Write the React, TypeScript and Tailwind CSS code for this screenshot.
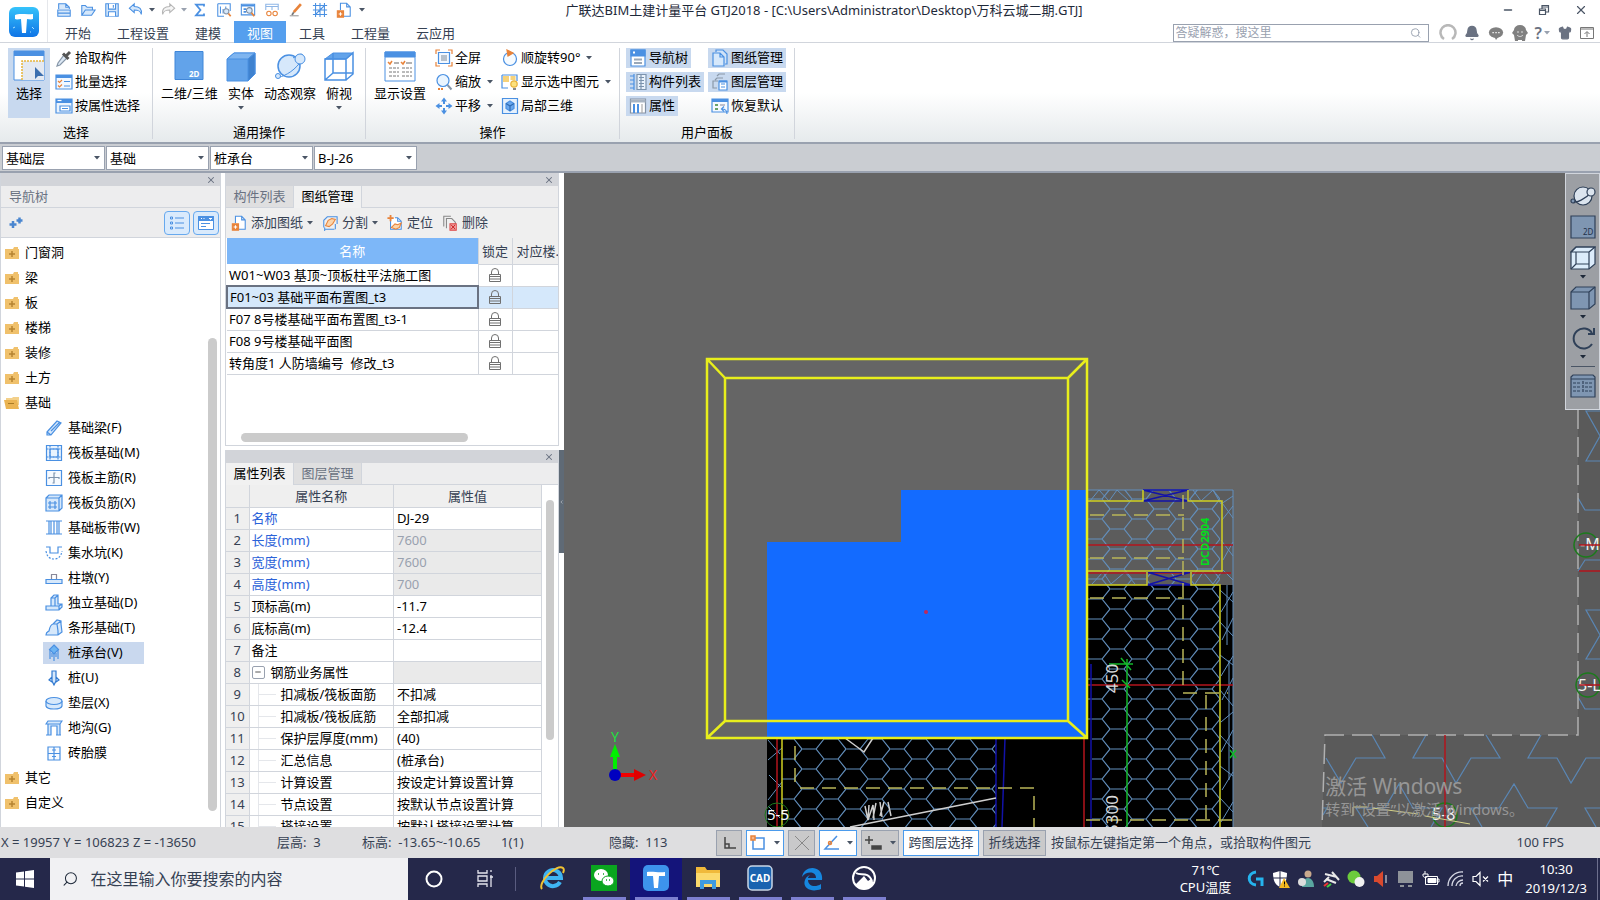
import type { ReactNode } from "react";
import { Bell, ChevronDown, MessageCircle, Minus, Search, Shirt, X } from "lucide-react";

const BLUE = "#4a90e2";
const PALE = "#d6e8fb";
const ORANGE = "#e8833a";

// Line icons, all drawn on an 18x18 grid
const glyphs: Record<string, ReactNode> = {
  file: (
    <>
      <path d="M3 8V2h8l4 4v2M11 2v4h4" fill={PALE} />
      <path d="M2 9h14v7H2zM2 12.500h14" fill={PALE} />
    </>
  ),
  open: <path d="M2 15V4h4l2 2h6v3M2 15l4-6h11l-4 6z" fill={PALE} />,
  save: (
    <>
      <path d="M2 2h14v14H2z" fill={PALE} />
      <path d="M5 2v6h8V2M5 16v-5h8v5M10.500 3.500v3" fill="#fff" />
    </>
  ),
  undo: <path d="M7 2L1.500 7 7 12V9c5 0 7 1 8 5 1-6-2-9-8-9z" fill={PALE} />,
  redo: <path d="M11 2l5.500 5-5.500 5V9c-5 0-7 1-8 5-1-6 2-9 8-9z" stroke="#b5b5b5" fill="#f5f5f5" />,
  sigma: <path d="M13.500 5V3H4.500l5 6-5 6h9v-2" strokeWidth="2" />,
  report: (
    <>
      <path d="M2 2v14h7M2 2h14v8M5 5v8M8 8v5M11 5v4" fill="none" />
      <circle cx="11.500" cy="10.500" r="3" fill={PALE} stroke="#8293a8" />
      <path d="M14 13l2.500 3" stroke={ORANGE} strokeWidth="2" />
    </>
  ),
  lookup: (
    <>
      <path d="M1.500 2.500h15v12h-15z" fill="#fff" />
      <path d="M1.500 4h15M4 8h3M4 11h3" strokeWidth="2" />
      <circle cx="10.500" cy="9.500" r="3.200" fill={PALE} stroke="#7d8c9f" />
      <path d="M13 12l3 4" stroke={ORANGE} strokeWidth="2" />
    </>
  ),
  glasses: (
    <>
      <path d="M2 9V2.500h14V9M2 5h14M9 5v4" stroke="#8fb6e6" />
      <circle cx="5.500" cy="13" r="2.500" stroke={ORANGE} />
      <circle cx="12.500" cy="13" r="2.500" stroke={ORANGE} />
    </>
  ),
  brush: (
    <>
      <path d="M14.500 2.500l-8 9" stroke={ORANGE} strokeWidth="3" />
      <path d="M6.500 11.500l-2 3" stroke="#777" strokeWidth="2" />
      <path d="M2 15.500h10" stroke="#999" />
    </>
  ),
  axes: <path d="M4 1v16M9 1v16M14 1v16M1 4h16M1 9h16M1 14h16M9 9l5-5M4 14l5-5" />,
  addfile: (
    <>
      <path d="M5 9V1.500h7l4 4V16H9M12 1.500v4h4" fill="#fff" />
      <path d="M1.500 10h7v7h-7z" fill={ORANGE} stroke={ORANGE} />
      <path d="M5 11.500v4M3 13.500h4" stroke="#fff" />
    </>
  ),
  pick: (
    <>
      <path d="M9 6l3 3-7 7-3 1 1-3z" fill="#dce8f4" stroke="#8696a8" />
      <path d="M8 4.500l5.500 5.500M11 7l4-4" stroke="#555" strokeWidth="3" />
    </>
  ),
  batch: (
    <>
      <path d="M1 2h16v14H1z" fill="#f2f8ff" />
      <path d="M1 3.500h16" strokeWidth="3" />
      <path d="M3 8l1.500 1.500L7 7M3 12.500L4.500 14 7 11.500" stroke={ORANGE} />
      <path d="M9 8.500h6M9 13h6" />
    </>
  ),
  attr: (
    <>
      <path d="M1 2h16v14H1z" fill="#eaf3fd" />
      <path d="M1 4h16" strokeWidth="4" />
      <path d="M2.500 3.500h4" stroke="#fff" />
      <path d="M5 9h10v5H5zM7 11.500h6" fill="#fff" />
    </>
  ),
  full: (
    <>
      <path d="M1 5V1h4M13 1h4v4M17 13v4h-4M5 17H1v-4" stroke={ORANGE} />
      <path d="M3.500 3.500h11v11h-11z" fill="#f2f8ff" />
      <path d="M6 7h6M6 9h6M6 11h6" stroke="#7a8797" />
    </>
  ),
  zoom: (
    <>
      <circle cx="8" cy="7.500" r="6" fill="#eaf5ff" />
      <path d="M12.500 12l4 4.500" stroke="#8595a8" strokeWidth="2" />
      <path d="M3 16h5" stroke={ORANGE} strokeWidth="2" strokeDasharray="2 1" />
    </>
  ),
  move: (
    <path
      d="M9 .500L6 4.500h2v2.500h2V4.500h2zM9 17.500L6 13.500h2V11h2v2.500h2zM.500 9l4-3v2H7v2H4.500v2zM17.500 9l-4-3v2H11v2h2.500v2z"
      fill={BLUE}
      stroke="none"
    />
  ),
  rotate: (
    <>
      <circle cx="9" cy="10" r="6.500" fill="#f6fbff" />
      <path d="M6 1l6 3-5 3z" fill={ORANGE} stroke={ORANGE} />
    </>
  ),
  lamp: (
    <>
      <path d="M1 2h15v6M1 2v13h6" fill="none" />
      <path d="M2 3h6v6H2zM9.500 3h5v4h-5z" fill="#f6d27a" stroke="none" />
      <circle cx="13" cy="11" r="3.200" fill="#fde27e" stroke="#e8b13a" />
      <path d="M12 16h3" stroke="#888" strokeWidth="2" />
    </>
  ),
  local3d: (
    <>
      <path d="M1.500 1.500h15v15h-15z" fill="#e6f1fd" />
      <path d="M9 4l4 2.500v5L9 14l-4-2.500v-5z" fill="#6aa8ee" />
      <path d="M9 9v5M5 6.500L9 9l4-2.500" stroke="#2f6bb3" />
    </>
  ),
  nav: (
    <>
      <path d="M2 1h14v16H2z" fill="#fff" />
      <path d="M2 1h14v6H2z" fill={BLUE} />
      <path d="M4 3.500h2" stroke="#fff" strokeWidth="2" />
      <path d="M5 10.500h8M5 14h8" stroke="#9aa8b8" strokeWidth="2" />
    </>
  ),
  list: (
    <>
      <path d="M1 3h4M1 7h4M1 11h4M1 15h4M5 1v16" />
      <path d="M8 1.500h9v15H8z" fill="#e9f2fc" stroke="#7c93ad" />
      <path d="M10 4.500h5M10 7.500h5M10 10.500h5M10 13.500h5M12 2v14" stroke="#7c93ad" />
    </>
  ),
  props: (
    <>
      <path d="M1.500 2h15v14h-15z" fill="#fff" stroke="#8392a5" />
      <path d="M1.500 4h15" stroke="#a8b4c2" strokeWidth="3" />
      <path d="M5 7v9M9 7v9" stroke={BLUE} strokeWidth="2" />
      <path d="M13 7v9" stroke="#aaa" />
    </>
  ),
  sheets: (
    <>
      <path d="M5 3V1h7l4 4v10h-2" fill="#cfe2f8" />
      <path d="M2 4h7l4 4v9H2zM9 4v4h4" fill={PALE} />
    </>
  ),
  layers: (
    <>
      <path d="M6 3l2-2h6M4 7l2-2h6M2 11V8h5M2 11v4h4" stroke="#8a98a8" />
      <path d="M8 8h8v9H8z" fill="#fff" />
      <path d="M10 11h4M10 14h4" />
      <path d="M8 8.500h8" strokeWidth="2" />
    </>
  ),
  restore: (
    <>
      <path d="M1 2h16v13H1z" fill="#f4f9ff" />
      <path d="M1 3.500h16" strokeWidth="3" />
      <path d="M4 8h3M4 12h3" stroke="#6aa36a" strokeWidth="2" />
      <path d="M9 8h5" stroke="#99a" />
      <path d="M16 17c0-4-2-5-5-5M13 9.500L10.500 12l2.500 2.500" />
    </>
  ),
  split: (
    <>
      <path d="M2 14V6l4-4h11v8M3 16h11M3 14v4M15 10v6" />
      <path d="M4 12l3-6 4-2 4 1-3 5-4 3z" fill="#fbd5ac" stroke={ORANGE} />
    </>
  ),
  locate: (
    <>
      <path d="M4 6v10h12V7l-4-4H9M12 3v4h4" fill="#fff" />
      <path d="M4 0v7M.500 3.500h7" stroke={ORANGE} strokeWidth="2" />
      <path d="M5 14l4-4 3 1 4-2-2 5-4 2z" fill="#fbd5ac" stroke={ORANGE} />
    </>
  ),
  remove: (
    <>
      <path d="M2 13V1.500h8M5 15V4h6l4 4v2" fill="none" stroke="#888" />
      <path d="M9 10h7v7H9z" fill="#f7c4c4" stroke="#d44" />
      <path d="M10.500 11.500l4 4M14.500 11.500l-4 4" stroke="#c22" />
    </>
  ),
  beam: <path d="M2 13L12 2l4 2L6 16H2zM2 13l4 3M6 12L15 3" fill={PALE} />,
  raft: (
    <>
      <path d="M1.500 1.500h15v15h-15zM5 5h8v8H5z" fill="#e9f3fe" />
      <path d="M1.500 5h15M1.500 13h15M5 1.500v15M13 1.500v15" strokeDasharray="2 1" />
    </>
  ),
  mainbar: (
    <>
      <path d="M1.500 1.500h15v15h-15z" fill="#f6faff" />
      <path d="M4 10V8.500h10V10M10.500 4H9v10H7.500" stroke="#7c93ad" />
    </>
  ),
  negbar: (
    <>
      <path d="M1 4l3-3h13v13l-3 3H1zM1 4h13v13M14 4l3-3" fill={PALE} />
      <path d="M5 7v8M10 7v8M3 9h9M3 13h9" />
    </>
  ),
  band: <path d="M1 2h16M1 15h16M4 2v13M6 2v13M9 2v13M12 2v13M14 2v13" fill="none" />,
  pit: (
    <>
      <path d="M1 3h4v6h8V3h4" fill="none" />
      <path d="M1 7c1 6 4 8 8 8s7-2 8-8" strokeDasharray="2 1.500" />
    </>
  ),
  pier: (
    <>
      <path d="M1 10.500h16v4H1z" fill={PALE} />
      <path d="M6.500 10V5.500h5V10" stroke="#889" />
    </>
  ),
  isolated: <path d="M1 12h5V4l3-3h4v9h4v3l-3 3H1zM6 4h4v8M10 4l3-3M1 12h13v4M14 12l3-2" fill={PALE} />,
  strip: <path d="M1 16c0-3 1-3 3-4 1-4 1-6 4-7l4-4 4 1v3l1 8-4 3zM8 5h4l1 7v4M12 5l4-3" fill={PALE} />,
  cap: (
    <>
      <path d="M9 1l4.500 4.500L9 10 4.500 5.500z" fill="#6db4f2" />
      <path d="M5 6v9M9 10v7M13 6v9M7 9v4M11 9v4" />
    </>
  ),
  pile: <path d="M7 2h4v10l-2 4-2-4zM7 8l-3 3 3 2M11 8l3 3-3 2" fill={PALE} stroke="#2f78d0" />,
  cushion: (
    <>
      <path d="M1 7v5c1 4 15 4 16 0V7" fill={PALE} />
      <ellipse cx="9" cy="7" rx="8" ry="3.500" fill={PALE} />
    </>
  ),
  trench: <path d="M1 5l2-3h14l-2 3zM3 5v11h3V7h6v9h3V5M1 16h5M11 16h5" fill={PALE} />,
  brick: <path d="M3 3h12v13H3zM3 9.500h12M9 3v13M7 6h4M7 12.500h4" fill="#f6faff" />,
};

function Glyph({ name, className = "w-[18px] h-[18px]" }: { name: string; className?: string }) {
  return (
    <svg
      viewBox="0 0 18 18"
      className={`shrink-0 ${className}`}
      fill="none"
      stroke={BLUE}
      strokeWidth="1.200"
      aria-hidden="true"
    >
      {glyphs[name]}
    </svg>
  );
}

function Caret({ className = "text-gray-600" }: { className?: string }) {
  return (
    <svg viewBox="0 0 6 4" className={`w-[6px] h-1 shrink-0 ${className}`} fill="currentColor" aria-hidden="true">
      <path d="M0 0h6L3 3.500z" />
    </svg>
  );
}

function Logo({ className }: { className: string }) {
  return (
    <svg viewBox="0 0 30 30" className={className} aria-hidden="true">
      <defs>
        <linearGradient id="logo" x1="0" y1="0" x2="0" y2="1">
          <stop offset="0" stopColor="#35c3fb" />
          <stop offset="1" stopColor="#0f74e6" />
        </linearGradient>
      </defs>
      <rect width="30" height="30" rx="6" fill="url(#logo)" />
      <path d="M6 8c5-2 11 0 18-1v5c-2 1-4 0-6 0l-1 14h-4l-1-14c-2 0-4 1-6 0z" fill="#fff" />
      <path d="M4 21l2-1M23 20l2 2M21 25h1" stroke="#a9e2ff" />
    </svg>
  );
}

const quickTools = ["sigma", "report", "lookup", "glasses", "brush", "axes", "addfile"];
const menuTabs = ["开始", "工程设置", "建模", "视图", "工具", "工程量", "云应用"];

function TitleBar() {
  return (
    <header className="flex h-[43px] border-b border-gray-300 bg-white">
      <div className="flex w-12 shrink-0 items-center justify-center border-r border-gray-200 pt-[2px]">
        <Logo className="h-[30px] w-[30px]" />
      </div>
      <div className="flex flex-1 flex-col">
        <div className="grid h-[23px] grid-cols-[1fr_auto_1fr] items-center">
          <div className="flex items-center gap-[6px] pl-[7px]">
            <Glyph name="file" className="h-4 w-[18px]" />
            <Glyph name="open" className="h-4 w-[18px]" />
            <Glyph name="save" className="h-4 w-[18px]" />
            <Glyph name="undo" className="h-4 w-[18px]" />
            <Caret className="-mx-[2px] text-gray-600" />
            <Glyph name="redo" className="h-4 w-[18px]" />
            <Caret className="-mx-[2px] text-gray-400" />
            {quickTools.map((t) => (
              <Glyph key={t} name={t} className="h-4 w-[18px]" />
            ))}
            <Caret />
          </div>
          <h1 className="pt-px text-[13px] text-gray-800">
            广联达BIM土建计量平台 GTJ2018 - [C:\Users\Administrator\Desktop\万科云城二期.GTJ]
          </h1>
          <div className="flex items-center justify-end gap-6 pr-3 text-gray-600">
            <button type="button" aria-label="最小化">
              <Minus className="h-3 w-3" strokeWidth={3} />
            </button>
            <button type="button" aria-label="还原">
              <svg viewBox="0 0 12 12" className="h-3 w-3" fill="none" stroke="currentColor" strokeWidth="1.200">
                <path d="M1.500 5h6v5.500h-6zM1.500 6.500h6M4 5V1.500h6.500V8H8M4 3h6.500" />
              </svg>
            </button>
            <button type="button" aria-label="关闭">
              <X className="h-[14px] w-[14px]" strokeWidth={2} />
            </button>
          </div>
        </div>
        <div className="flex flex-1 items-stretch justify-between">
          <nav className="flex pl-1">
            {menuTabs.map((tab) => (
              <button
                key={tab}
                type="button"
                className={
                  tab === "视图"
                    ? "bg-[#559fee] px-[13px] pt-px text-[13px] leading-[18px] text-white"
                    : "px-[13px] pt-px text-[13px] leading-[18px] text-gray-700"
                }
              >
                {tab}
              </button>
            ))}
          </nav>
          <div className="flex items-center gap-[6px] pr-[6px] text-gray-500">
            <label className="mr-1 flex h-[18px] w-[256px] items-center border border-gray-400 px-[2px]">
              <input
                type="text"
                aria-label="搜索"
                placeholder="答疑解惑，搜这里"
                className="w-full bg-transparent text-xs outline-none placeholder:text-gray-400"
              />
              <Search className="mr-1 h-3 w-3 text-gray-400" />
            </label>
            <svg viewBox="0 0 18 18" className="h-[18px] w-[18px]" fill="none" stroke="#b8b8b8" strokeWidth="2.500">
              <path d="M5 15A7.500 7.500 0 1 1 13 15" />
            </svg>
            <Bell className="h-4 w-[18px] fill-gray-500" />
            <svg viewBox="0 0 18 18" className="h-4 w-[18px]" fill="#808080">
              <ellipse cx="9" cy="8.500" rx="8" ry="6" />
              <path d="M7 13l2 4 3-4z" />
              <path d="M5 8.500h1.500M8.300 8.500h1.500M11.500 8.500H13" stroke="#fff" strokeWidth="1.500" />
            </svg>
            <svg viewBox="0 0 18 18" className="h-[18px] w-[18px]">
              <path d="M3 6a6 5 0 0 1 12 0l2 3-2 2-1 6h-3v-1H7v1H4l-1-6-2-2z" fill="#808080" />
              <path d="M6 8h2M10 8h2M6 11c2 2 4 2 6 0" stroke="#ddd" fill="none" />
            </svg>
            <span className="text-base font-semibold">?</span>
            <Caret className="-ml-1 text-gray-400" />
            <Shirt className="h-[14px] w-[18px] fill-gray-500" />
            <svg viewBox="0 0 14 14" className="h-[14px] w-[14px]" fill="none" stroke="#777">
              <path d="M.500 1.500h13v11H.500zM.500 3h13M7 11V6M4.500 8L7 5.500 9.500 8" />
            </svg>
          </div>
        </div>
      </div>
    </header>
  );
}

function RibbonGroup({ label, children, className }: { label: string; children: ReactNode; className: string }) {
  return (
    <section className={`mt-[5px] mb-[3px] flex shrink-0 flex-col border-r border-gray-300 ${className}`}>
      <div className="flex flex-1">{children}</div>
      <h2 className="text-center text-[13px] leading-[14px]">{label}</h2>
    </section>
  );
}

function SmallTool({ icon, label, caret, active }: { icon: string; label: string; caret?: boolean; active?: boolean }) {
  return (
    <button
      type="button"
      className={
        active
          ? "flex h-5 w-fit items-center gap-[2px] bg-[#c8d9ef] px-[3px] text-[13px] whitespace-nowrap"
          : "flex h-5 w-fit items-center gap-[2px] px-[3px] text-[13px] whitespace-nowrap"
      }
    >
      <Glyph name={icon} />
      {label}
      {caret && (
        <span className="ml-1">
          <Caret />
        </span>
      )}
    </button>
  );
}

function BigTool({ label, caret, children }: { label: string; caret?: boolean; children: ReactNode }) {
  return (
    <button type="button" className="flex flex-col items-center pt-[2px] text-[13px] leading-[18px] whitespace-nowrap">
      <svg viewBox="0 0 32 32" className="mb-[2px] h-8 w-8" fill="none" stroke={BLUE} aria-hidden="true">
        {children}
      </svg>
      {label}
      {caret && (
        <span className="mt-1">
          <Caret />
        </span>
      )}
    </button>
  );
}

function Ribbon() {
  return (
    <div className="flex h-[101px] border-b-2 border-gray-400 bg-gradient-to-b from-white from-50% to-[#e6eaec]">
      <RibbonGroup label="选择" className="w-[153px]">
        <button
          type="button"
          className="ml-2 flex h-[70px] w-[42px] flex-col items-center bg-[#c8d9ef] pt-[2px] text-[13px] leading-[18px]"
        >
          <svg viewBox="0 0 32 32" className="mb-[2px] h-8 w-8" aria-hidden="true">
            <path d="M1 1h30v29H1z" fill="#fff" stroke={BLUE} />
            <path d="M1 1h30v5H1z" fill={BLUE} />
            <path d="M9 30V11h22v19z" fill="#e4e9f1" />
            <path d="M9 30V11h22" fill="none" stroke="#e8b53a" strokeWidth="1.500" strokeDasharray="2 1" />
            <path d="M22 17v12l3-3h6z" fill="#3d6fae" />
          </svg>
          选择
        </button>
        <div className="ml-[2px] flex flex-col gap-1">
          <SmallTool icon="pick" label="拾取构件" />
          <SmallTool icon="batch" label="批量选择" />
          <SmallTool icon="attr" label="按属性选择" />
        </div>
      </RibbonGroup>

      <RibbonGroup label="通用操作" className="w-[213px]">
        <div className="flex flex-1 items-start justify-between pr-[10px] pl-2">
          <BigTool label="二维/三维">
            <path d="M2 1.500h28v28H2z" fill="#62a3ea" stroke="#3f86d8" />
            <text x="16" y="27" fontSize="8" fontWeight="700" fill="#fff" stroke="none">
              2D
            </text>
          </BigTool>
          <BigTool label="实体" caret>
            <path d="M2 9l7-6h21v21l-7 7H2z" fill="#62a3ea" />
            <path d="M2 9l7-6h21l-7 6z" fill="#7fb5f0" />
            <path d="M23 9l7-6v21l-7 7z" fill="#3f82cf" />
          </BigTool>
          <BigTool label="动态观察">
            <circle cx="15" cy="16" r="11" fill={PALE} strokeWidth="1.500" />
            <path d="M3 24c-5 7 12 2 21-9s5-14-5-7" />
            <circle cx="26" cy="9" r="5" fill={PALE} />
            <circle cx="4" cy="26" r="2.500" fill={PALE} />
          </BigTool>
          <BigTool label="俯视" caret>
            <path d="M2 9l8-6h20l-7 6z" fill="#62a3ea" />
            <path d="M2 9h21v21H2zM23 9l7-6v21l-7 6M10 3v20h20M10 23l-8 7" strokeWidth="1.500" />
          </BigTool>
        </div>
      </RibbonGroup>

      <RibbonGroup label="操作" className="w-[254px]">
        <div className="pl-2">
          <BigTool label="显示设置">
            <path d="M1 2h30v29H1z" fill="#fff" />
            <path d="M1 2h30v5H1z" fill={BLUE} />
            <path d="M4 12l2 2 2-3M17 12l2 2 2-3" stroke={ORANGE} strokeWidth="1.500" />
            <path d="M10 13h5M22 13h6" stroke="#666" />
            <path d="M5 18h10M5 22h10M5 26h10M18 18h10M18 22h10M18 26h10" stroke="#777" strokeDasharray="3 1" />
          </BigTool>
        </div>
        <div className="ml-[6px] flex w-[66px] flex-col gap-1">
          <SmallTool icon="full" label="全屏" />
          <SmallTool icon="zoom" label="缩放" caret />
          <SmallTool icon="move" label="平移" caret />
        </div>
        <div className="flex flex-col gap-1">
          <SmallTool icon="rotate" label="顺旋转90°" caret />
          <SmallTool icon="lamp" label="显示选中图元" caret />
          <SmallTool icon="local3d" label="局部三维" />
        </div>
      </RibbonGroup>

      <RibbonGroup label="用户面板" className="w-[175px]">
        <div className="ml-[6px] flex w-[82px] flex-col gap-1">
          <SmallTool icon="nav" label="导航树" active />
          <SmallTool icon="list" label="构件列表" active />
          <SmallTool icon="props" label="属性" active />
        </div>
        <div className="flex flex-col gap-1">
          <SmallTool icon="sheets" label="图纸管理" active />
          <SmallTool icon="layers" label="图层管理" active />
          <SmallTool icon="restore" label="恢复默认" />
        </div>
      </RibbonGroup>
    </div>
  );
}

const filters = [
  { label: "楼层", value: "基础层" },
  { label: "构件大类", value: "基础" },
  { label: "构件类型", value: "桩承台" },
  { label: "构件", value: "B-J-26" },
];

function FilterBar() {
  return (
    <div className="flex h-[29px] items-center gap-px border-b-2 border-gray-400 bg-[#cacdd2] pt-px pl-[2px]">
      {filters.map((f) => (
        <div key={f.label} className="relative flex w-[103px] items-center">
          <select
            aria-label={f.label}
            className="h-6 w-full appearance-none border border-gray-400 bg-white pl-[3px] text-[13px] leading-[22px]"
          >
            <option>{f.value}</option>
          </select>
          <span className="pointer-events-none absolute right-[5px]">
            <Caret />
          </span>
        </div>
      ))}
    </div>
  );
}

function PanelStrip() {
  return (
    <div className="flex h-[13px] shrink-0 items-center justify-end bg-[#d2d4d9] pr-1">
      <button type="button" aria-label="关闭面板" className="text-gray-500">
        <X className="h-[10px] w-[10px]" strokeWidth={2.500} />
      </button>
    </div>
  );
}

function Folder({ open }: { open?: boolean }) {
  return (
    <svg viewBox="0 0 16 16" className="h-4 w-4 shrink-0" aria-hidden="true">
      {open ? (
        <>
          <path d="M2 3h6l1-1h6v8H2z" fill="#f3d08a" />
          <path d="M0 5h13l2 9H2z" fill="#ebb452" />
          <path d="M4 8.500h6" stroke="#a97a24" />
        </>
      ) : (
        <>
          <path d="M1 4h8l1-2h4v2h1v10H1z" fill="#f0c16c" />
          <path d="M8 6v6M5 9h6" stroke="#b58330" strokeWidth="1.500" />
        </>
      )}
    </svg>
  );
}

const foundation = [
  ["beam", "基础梁(F)"],
  ["raft", "筏板基础(M)"],
  ["mainbar", "筏板主筋(R)"],
  ["negbar", "筏板负筋(X)"],
  ["band", "基础板带(W)"],
  ["pit", "集水坑(K)"],
  ["pier", "柱墩(Y)"],
  ["isolated", "独立基础(D)"],
  ["strip", "条形基础(T)"],
  ["cap", "桩承台(V)"],
  ["pile", "桩(U)"],
  ["cushion", "垫层(X)"],
  ["trench", "地沟(G)"],
  ["brick", "砖胎膜"],
];

function TreeFolder({ label, open }: { label: string; open?: boolean }) {
  return (
    <li className="flex h-[25px] items-center gap-[5px] pl-[3px] text-[13px]">
      <Folder open={open} />
      {label}
    </li>
  );
}

function NavTree() {
  return (
    <aside className="flex w-[221px] shrink-0 flex-col border-x border-gray-300 bg-white">
      <PanelStrip />
      <h2 className="h-[22px] shrink-0 border-b border-gray-300 bg-[#ededee] pl-2 text-[13px] leading-[20px] text-gray-500">
        导航树
      </h2>
      <div className="flex h-[30px] shrink-0 items-center border-b border-gray-300 bg-[#ededee] pr-[1px] pl-2">
        <svg viewBox="0 0 14 12" className="h-3 w-[14px]" stroke="#4a86d0" strokeWidth="2.500">
          <path d="M4 4v7M.500 7.500h7M10.500 .500v6M7.500 3.500h6" />
        </svg>
        <button
          type="button"
          aria-label="列表视图"
          className="ml-auto flex h-6 w-[26px] items-center justify-center rounded border border-[#67a9ee] bg-[#d9eafc]"
        >
          <svg viewBox="0 0 14 14" className="h-[14px] w-[14px]" stroke="#4a90e2" fill="none">
            <path d="M.500 1h2v2h-2zM.500 6h2v2h-2zM.500 11h2v2h-2zM5 2h9M5 7h9M5 12h9" />
          </svg>
        </button>
        <button
          type="button"
          aria-label="图标视图"
          className="ml-[3px] flex h-6 w-[26px] items-center justify-center rounded border border-[#67a9ee] bg-[#d9eafc]"
        >
          <svg viewBox="0 0 16 14" className="h-[14px] w-4" stroke="#4a90e2" fill="#fff">
            <path d="M.500 .500h15v13H.500z" />
            <path d="M.500 .500h15v4H.500z" fill="#4a90e2" />
            <path d="M3 2.500h1M5.500 2.500h1M11 2l1.500 1.500L14 2" stroke="#fff" />
            <path d="M3 7.500h9M3 10.500h5" />
          </svg>
        </button>
      </div>
      <div className="flex min-h-0 flex-1 pt-[2px]">
        <ul className="flex-1 overflow-hidden">
          {["门窗洞", "梁", "板", "楼梯", "装修", "土方"].map((f) => (
            <TreeFolder key={f} label={f} />
          ))}
          <TreeFolder label="基础" open />
          {foundation.map(([icon, label]) => (
            <li key={label} className="flex h-[25px] items-center pl-[42px] text-[13px]">
              <button
                type="button"
                className={
                  icon === "cap"
                    ? "flex h-[22px] w-[101px] items-center gap-[5px] bg-[#c9d8ee] pl-[2px]"
                    : "flex h-[22px] w-[101px] items-center gap-[5px] pl-[2px]"
                }
              >
                <Glyph name={icon} />
                {label}
              </button>
            </li>
          ))}
          <TreeFolder label="其它" />
          <TreeFolder label="自定义" />
        </ul>
        <div className="flex w-[12px] flex-col pt-[98px] pb-4">
          <div className="w-[9px] flex-1 rounded-full bg-[#cbcbcb]" />
        </div>
      </div>
    </aside>
  );
}

function PanelTabs({ tabs, active }: { tabs: string[]; active: string }) {
  return (
    <div className="flex h-[22px] shrink-0 bg-[#ededee]">
      {tabs.map((t) => (
        <button
          key={t}
          type="button"
          className={
            t === active
              ? "w-[68px] border-r border-gray-300 bg-[#f1f1f1] text-[13px] text-black"
              : "w-[68px] border-r border-b border-gray-300 bg-[#dfdfe0] text-[13px] text-gray-500"
          }
        >
          {t}
        </button>
      ))}
      <span className="flex-1 border-b border-gray-300" />
    </div>
  );
}

function Lock() {
  return (
    <svg viewBox="0 0 12 14" className="mx-auto h-[14px] w-3" fill="none" stroke="#707070" aria-label="锁定">
      <path d="M2.500 7V4a3.500 3.500 0 0 1 7 0v3M.500 6.500h11v7H.500zM.500 8.500h11M.500 11h11" />
    </svg>
  );
}

const drawings = [
  "W01~W03 基顶~顶板柱平法施工图",
  "F01~03 基础平面布置图_t3",
  "F07 8号楼基础平面布置图_t3-1",
  "F08 9号楼基础平面图",
  "转角度1 人防墙编号  修改_t3",
];

function DrawingPanel() {
  return (
    <section className="flex h-[273px] shrink-0 flex-col border-r border-b border-l border-gray-300 bg-white">
      <PanelStrip />
      <PanelTabs tabs={["构件列表", "图纸管理"]} active="图纸管理" />
      <div className="flex h-[30px] shrink-0 items-center gap-[9px] bg-[#efefef] pl-[5px] text-[13px] text-gray-700">
        <button type="button" className="flex items-center gap-1">
          <Glyph name="addfile" className="h-4 w-4" />
          添加图纸
          <Caret />
        </button>
        <button type="button" className="flex items-center gap-1">
          <Glyph name="split" className="h-4 w-4" />
          分割
          <Caret />
        </button>
        <button type="button" className="flex items-center gap-1">
          <Glyph name="locate" className="h-4 w-4" />
          定位
        </button>
        <button type="button" className="flex items-center gap-1">
          <Glyph name="remove" className="h-4 w-4" />
          删除
        </button>
      </div>
      <table className="w-full table-fixed border-collapse text-[13px] leading-[20px]">
        <thead>
          <tr className="h-[26px]">
            <th className="border-r border-gray-300 bg-[#7db7f8] font-normal text-white">名称</th>
            <th className="w-[34px] border-r border-b border-gray-300 bg-[#efefef] font-normal text-gray-700">锁定</th>
            <th className="w-[46px] overflow-hidden border-b border-gray-300 bg-[#efefef] pl-1 font-normal whitespace-nowrap text-gray-700">
              对应楼.
            </th>
          </tr>
        </thead>
        <tbody>
          {drawings.map((d, i) => (
            <tr key={d} className={i === 1 ? "h-[22px] bg-[#d5e8fb]" : "h-[22px]"}>
              <td
                className={
                  i === 1
                    ? "overflow-hidden border-2 border-gray-500 px-[2px] whitespace-pre"
                    : "overflow-hidden border-r border-b border-gray-300 px-[2px] whitespace-pre"
                }
              >
                {d}
              </td>
              <td className="border-r border-b border-gray-300">
                <Lock />
              </td>
              <td className="border-b border-gray-300" />
            </tr>
          ))}
        </tbody>
      </table>
      <div className="mx-[15px] mt-auto mb-[3px] h-[9px] w-[227px] rounded-full bg-[#cbcbcb]" />
    </section>
  );
}

type Prop = { name: string; value: string; kind?: "key" | "fixed" | "group" | "child" };

const properties: Prop[] = [
  { name: "名称", value: "DJ-29", kind: "key" },
  { name: "长度(mm)", value: "7600", kind: "fixed" },
  { name: "宽度(mm)", value: "7600", kind: "fixed" },
  { name: "高度(mm)", value: "700", kind: "fixed" },
  { name: "顶标高(m)", value: "-11.7" },
  { name: "底标高(m)", value: "-12.4" },
  { name: "备注", value: "" },
  { name: "钢筋业务属性", value: "", kind: "group" },
  { name: "扣减板/筏板面筋", value: "不扣减", kind: "child" },
  { name: "扣减板/筏板底筋", value: "全部扣减", kind: "child" },
  { name: "保护层厚度(mm)", value: "(40)", kind: "child" },
  { name: "汇总信息", value: "(桩承台)", kind: "child" },
  { name: "计算设置", value: "按设定计算设置计算", kind: "child" },
  { name: "节点设置", value: "按默认节点设置计算", kind: "child" },
  { name: "搭接设置", value: "按默认搭接设置计算", kind: "child" },
];

function PropName({ prop }: { prop: Prop }) {
  if (prop.kind === "group") {
    return (
      <span className="flex items-center gap-[6px]">
        <button
          type="button"
          aria-label="折叠"
          className="flex h-[13px] w-[13px] items-center justify-center rounded-xs border border-gray-400"
        >
          <Minus className="h-2 w-2" />
        </button>
        {prop.name}
      </span>
    );
  }
  if (prop.kind === "child") {
    return (
      <span className="ml-[6px] flex h-[21px] items-center gap-[5px] border-l border-gray-200">
        <span className="w-[17px] border-t border-gray-200" />
        {prop.name}
      </span>
    );
  }
  if (prop.kind) return <span className="text-[#2b62d9]">{prop.name}</span>;
  return <>{prop.name}</>;
}

function PropertyPanel() {
  return (
    <section className="flex min-h-0 flex-1 flex-col overflow-hidden border-x border-gray-300 bg-white">
      <PanelStrip />
      <PanelTabs tabs={["属性列表", "图层管理"]} active="属性列表" />
      <div className="flex min-h-0 flex-1 overflow-hidden">
        <table className="w-[316px] table-fixed border-collapse self-start text-[13px] leading-[20px]">
          <thead>
            <tr className="h-[22px] bg-[#efefef] text-gray-700">
              <th className="w-[23px] border-r border-b border-gray-300" aria-label="序号" />
              <th className="border-r border-b border-gray-300 font-normal">属性名称</th>
              <th className="w-[148px] border-r border-b border-gray-300 font-normal">属性值</th>
            </tr>
          </thead>
          <tbody>
            {properties.map((p, i) => (
              <tr key={p.name} className="h-[22px]">
                <td className="border-r border-b border-gray-300 bg-[#efefef] text-center text-gray-700">{i + 1}</td>
                <td className="border-r border-b border-gray-300 pl-[2px] whitespace-nowrap">
                  <PropName prop={p} />
                </td>
                <td
                  className={
                    p.kind === "fixed" || p.kind === "group"
                      ? "border-r border-b border-gray-300 bg-[#eaeaea] pl-[3px] text-gray-400"
                      : "border-r border-b border-gray-300 pl-[3px]"
                  }
                >
                  {p.value}
                </td>
              </tr>
            ))}
          </tbody>
        </table>
        <div className="flex flex-1 justify-center pt-[15px]">
          <div className="h-[240px] w-2 rounded-full bg-[#cbcbcb]" />
        </div>
      </div>
    </section>
  );
}

const YELLOW = "#e8ee1c";
const KHAKI = "#b9b558";

// Irregular wall hatch along the outer face
const wallHatch =
  "M1220 500l13 18M1222 520l11-14M1221 540l12 16M1223 560l10-18M1220 590l13 12M1221 612l12-20M1220 622l13 14M1222 640l11-22M1220 655l13 10M1221 676l12-20M1220 690l13 16M1222 700l11-22M1221 722l12-10M1220 735l13 14M1221 752l12-22M1220 766l13 10M1222 790l11-18M1220 798l13 14M1221 822l12-20M1227 585v60M1229 660v120M1090 501l9-11 10 11 8-11 12 11M1092 584l11-12 8 12 14-12 10 12M1193 490l8 11 12-11 8 14 12-8M1195 584l8-12 10 12 10-14 10 10M768 740l12 14M768 760l14-12M769 775l12 12M768 800l14-18M768 806l12 12";

const stars =
  "M1372 735L1385 758H1356L1341 783 1326 758M1426 735L1413 758H1442L1456 783 1471 758H1500L1486 735M1541 735L1528 758H1557L1571 783 1586 758H1600M1368 827L1356 808H1385L1399 784 1413 808H1442L1431 827M1482 827L1471 808H1499L1514 784 1528 808H1557L1546 827M1596 827L1585 808H1600M1322 808H1327L1323 815M1600 411H1586L1600 436 1586 461H1600M1578 498L1585 510H1600M1600 560H1585L1578 571M1600 610H1586L1600 635 1586 659H1600M1578 697L1585 709H1600";

function Drawing() {
  return (
    <svg
      viewBox="564 173 1036 654"
      preserveAspectRatio="xMinYMin slice"
      className="block h-full w-full"
      fontFamily="'Noto Sans', sans-serif"
      fill="none"
    >
      <defs>
        <pattern id="honeycomb" width="44" height="20" patternUnits="userSpaceOnUse" x="1110" y="609">
          <path d="M0 0h14l8 10h14l8-10M0 20h14l8-10M36 10l8 10" stroke="#628fbd" strokeWidth="1.200" />
        </pattern>
      </defs>

      <path d="M767 738h319V585h147v242H767z" fill="#000" />
      <path d="M1086 490h147v95h-147z" fill="#5c5c5c" />
      <path d="M1086 490h134v337h-128v-89h-6zM782 738h214v89H782z" fill="url(#honeycomb)" />
      <path d={wallHatch} stroke="#628fbd" />
      <path d="M1086 490h147v337" stroke="#628fbd" />

      <path d="M1086 545h147M1086 573h145M1086 685h147M1084 738v89M777 738v89" stroke="#b3141d" strokeWidth="1.500" />
      <path
        d="M1143 490h45v11h-45M1143 501l45-11M1143 490l45 11M1147 572h44v13h-44zM1147 572l44 13M1147 585l44-13M1091 664v163M996 738v89M1005 738l-3 89"
        stroke="#1212a8"
        strokeWidth="1.500"
      />
      <path
        d="M1086 501h57v-11M1188 490v11h34v70h-136M1086 585h61v-13M1191 572v13h29v242M782 738v89"
        stroke="#cfd020"
        strokeWidth="1.500"
      />
      <path
        d="M1090 515h94M1090 558h94M1090 598h94M1183 495v198h45M1206 695v125M795 746v42M800 788h234v39M1086 820h147"
        stroke={KHAKI}
        strokeWidth="1.500"
        strokeDasharray="14 8"
      />
      <path d="M1127 659v168M1109 664h24M1121 658l10 12M1122 680l8 8M1230 750l6 8M1236 750l-6 8" stroke="#12b82a" strokeWidth="1.500" />
      <g fill="#00e01a" fontSize="11" fontWeight="700">
        <text transform="translate(1209 566) rotate(-90)">DCD2904</text>
      </g>
      <g fill="#d8d8d8" fontSize="17">
        <text transform="translate(1118 693) rotate(-90)">450</text>
        <text transform="translate(1118 834) rotate(-90)">5300</text>
      </g>
      <path
        d="M845 738l19 14 9-14M850 827l146-29M865 806l3 14M869 805l-1 15 5-15 1 15M876 803l-3 15M880 802l2 15M884 802l-4 14M888 802l3 14"
        stroke="#cfcfcf"
        strokeWidth="1.500"
      />
      <circle cx="777" cy="815" r="12" stroke="#1c7a1c" />
      <text x="767" y="820" fontSize="15" fill="#fff">
        5-5
      </text>

      <path d="M767 542h134v-52h185v248H767z" fill="#136bff" />
      <path
        d="M707 359h380v379H707zM725 378h343v343H725zM707 359l18 19M1087 359l-19 19M707 738l18-17M1087 738l-19-17"
        stroke={YELLOW}
        strokeWidth="2.500"
      />
      <circle cx="926" cy="612" r="2" fill="#c02a5a" />

      <path d="M615 775v-20" stroke="#00f000" strokeWidth="4" />
      <path d="M615 744l5 13h-10z" fill="#00f000" />
      <path d="M615 775h20" stroke="#f00000" strokeWidth="4" />
      <path d="M646 775l-12-6v12z" fill="#e00000" />
      <circle cx="615" cy="775" r="6" fill="#0000c0" />
      <text x="611" y="742" fontSize="14" fill="#20e040">
        Y
      </text>
      <text x="649" y="780" fontSize="14" fill="#f02020">
        X
      </text>

      <path d="M1578 409h22v418h-278l3-92h253z" fill="#5a5a5a" />
      <path d={stars} stroke="#5a86b4" strokeWidth="1.200" />
      <path d="M1578 409v326h-253l-3 92" stroke="#b0b0b0" strokeWidth="1.500" strokeDasharray="20 8" />
      <circle cx="1586" cy="545" r="12" stroke="#1c7a1c" strokeWidth="1.500" />
      <circle cx="1588" cy="685" r="12" stroke="#1c7a1c" strokeWidth="1.500" />
      <circle cx="1445" cy="815" r="12" stroke="#1c7a1c" strokeWidth="1.500" />
      <g fill="#f2f2f2" fontSize="16">
        <text x="1580" y="550">-M</text>
        <text x="1578" y="691">5-L</text>
        <text x="1432" y="820">5-8</text>
      </g>
      <path d="M1445 735v92M1579 545h21M1579 571h21M1579 685h21" stroke="#b3141d" strokeWidth="1.500" />
      <path d="M1353 815v-8h14M1372 808l46 6M1425 816l45 8" stroke="#d5d28a" />
    </svg>
  );
}

function ViewTool({ label, caret, children }: { label: string; caret?: boolean; children: ReactNode }) {
  return (
    <button type="button" aria-label={label} className="flex flex-col items-center gap-[5px]">
      <svg viewBox="0 0 26 24" className="h-6 w-[26px]" fill="#7f96b2" stroke="#2f4058" strokeWidth="1.200">
        {children}
      </svg>
      {caret && <Caret className="text-gray-800" />}
    </button>
  );
}

function Viewport() {
  return (
    <main className="relative min-w-0 flex-1 overflow-hidden bg-[#656565]">
      <Drawing />
      <div className="absolute top-0 right-0 flex h-[237px] w-[35px] flex-col items-center gap-[7px] border border-gray-300 bg-[#9c9fa4] pt-[10px]">
        <ViewTool label="动态观察">
          <circle cx="13" cy="12" r="9" fill="#dbe4ee" />
          <path d="M3 17c3 3 12-2 20-10" fill="none" />
          <circle cx="21" cy="8" r="4" fill="#dbe4ee" />
          <circle cx="3" cy="17" r="2" />
        </ViewTool>
        <ViewTool label="二维">
          <path d="M1 1h24v22H1z" />
          <text x="13" y="20" fontSize="8" fill="#22324a" stroke="none">
            2D
          </text>
        </ViewTool>
        <ViewTool label="俯视" caret>
          <path d="M1 6l5-5h19v17l-6 5H1z" fill="#dcecfb" />
          <path d="M1 6l5-5h19l-6 5zM1 6h18v17M19 6l6-5M6 6v12h13M1 23l5-5" fill="none" />
        </ViewTool>
        <ViewTool label="实体" caret>
          <path d="M1 6l5-5h19v17l-6 5H1z" />
          <path d="M1 6h18v17M19 6l6-5" fill="none" />
        </ViewTool>
        <ViewTool label="旋转" caret>
          <path d="M22 18A10 10 0 1 1 22 7M24 2v6h-6" fill="none" strokeWidth="2" />
        </ViewTool>
        <span className="w-6 border-t border-gray-600" />
        <ViewTool label="显示设置">
          <path d="M1 3l2-2h20l2 2v20H1zM1 5h24" />
          <path d="M3 9h8M3 13h8M3 17h8M15 9h8M15 13h8M15 17h8M13 7v12" fill="none" strokeDasharray="3 1" />
        </ViewTool>
      </div>
      <div className="pointer-events-none absolute right-[76px] bottom-2 text-[#969696]">
        <p className="text-[21px] leading-[26px]">激活 Windows</p>
        <p className="text-[15px] leading-[20px]">转到“设置”以激活 Windows。</p>
      </div>
    </main>
  );
}

function StatusButton({ label, active, children, className }: { label: string; active?: boolean; children: ReactNode; className: string }) {
  return (
    <button
      type="button"
      aria-label={label}
      className={
        active
          ? `flex h-[26px] items-center justify-center gap-2 border border-[#4b9bec] bg-white whitespace-nowrap ${className}`
          : `flex h-[26px] items-center justify-center gap-2 border border-gray-400 bg-[#c9c9ca] whitespace-nowrap ${className}`
      }
    >
      {children}
    </button>
  );
}

function StatusBar() {
  return (
    <footer className="flex h-[31px] shrink-0 items-center bg-[#dedee0] pt-px text-[13px] whitespace-nowrap text-gray-700">
      <span className="w-[277px] pl-px">X = 19957 Y = 106823 Z = -13650</span>
      <span className="w-[85px]">层高:&nbsp; 3</span>
      <span className="w-[139px]">标高:&nbsp; -13.65~-10.65</span>
      <span className="w-[108px]">1(1)</span>
      <span className="w-[107px]">隐藏:&nbsp; 113</span>
      <div className="flex gap-[4px]">
        <StatusButton label="正交" className="w-[26px]">
          <svg viewBox="0 0 14 14" className="h-[14px] w-[14px]" fill="none" stroke="#444" strokeWidth="1.500">
            <path d="M3 1v11h11M3 8h4v4" />
          </svg>
        </StatusButton>
        <StatusButton label="捕捉" active className="w-[38px]">
          <svg viewBox="0 0 16 16" className="h-4 w-4" fill="none" stroke={BLUE} strokeWidth="1.500">
            <path d="M3 3h11v11H3z" />
            <path d="M1 1h4v4H1z" fill="#f7b48a" stroke={ORANGE} />
          </svg>
          <Caret />
        </StatusButton>
        <StatusButton label="交点" className="w-[27px]">
          <svg viewBox="0 0 16 16" className="h-4 w-4" stroke="#888">
            <path d="M1 1l14 14M15 1L1 15" />
          </svg>
        </StatusButton>
        <StatusButton label="角度" active className="w-[38px]">
          <svg viewBox="0 0 16 16" className="h-4 w-4" fill="none" stroke={BLUE} strokeWidth="1.500">
            <path d="M14 1L2 14h14" />
            <circle cx="7" cy="8" r="1.500" stroke={ORANGE} />
          </svg>
          <Caret />
        </StatusButton>
        <StatusButton label="偏移" className="w-[38px]">
          <svg viewBox="0 0 18 16" className="h-4 w-[18px]" fill="none" stroke="#444" strokeWidth="1.500">
            <path d="M5 1v8M1 5h8" />
            <path d="M8 11h9v3H8z" fill="#444" />
          </svg>
          <Caret />
        </StatusButton>
        <StatusButton label="跨图层选择" active className="w-[76px]">
          跨图层选择
        </StatusButton>
        <StatusButton label="折线选择" className="w-[63px]">
          折线选择
        </StatusButton>
      </div>
      <span className="ml-[5px]">按鼠标左键指定第一个角点，或拾取构件图元</span>
      <span className="ml-auto pr-9">100 FPS</span>
    </footer>
  );
}

function TaskIcon({ label, running, active, children }: { label: string; running?: boolean; active?: boolean; children: ReactNode }) {
  return (
    <button
      type="button"
      aria-label={label}
      className={active ? "flex h-full w-[52px] flex-col items-center bg-[#14147a]" : "flex h-full w-[52px] flex-col items-center"}
    >
      <span className="flex flex-1 items-center">
        <svg viewBox="0 0 26 26" className="h-[26px] w-[26px]" fill="none">
          {children}
        </svg>
      </span>
      <span className={running ? "h-[3px] w-[43px] bg-[#7d7fd0]" : "h-[3px] w-[43px]"} />
    </button>
  );
}

function Taskbar() {
  return (
    <div className="flex h-[42px] shrink-0 items-center bg-[#25284a] text-[13px] text-white">
      <button type="button" aria-label="开始" className="flex h-full w-[50px] items-center justify-center">
        <svg viewBox="0 0 18 18" className="h-[18px] w-[18px]" fill="#fff">
          <path d="M0 2.500L8 1.500v7H0zM9 1.300L18 0v8.500H9zM0 9.500h8v7l-8-1zM9 9.500h9V18l-9-1.300z" />
        </svg>
      </button>
      <label className="flex h-full w-[358px] items-center gap-3 bg-[#f1f1f3] px-3">
        <Search className="h-[18px] w-[18px] -scale-x-100 text-gray-800" strokeWidth={1.500} />
        <input
          type="text"
          aria-label="搜索"
          placeholder="在这里输入你要搜索的内容"
          className="w-full bg-transparent text-base outline-none placeholder:text-gray-700"
        />
      </label>
      <TaskIcon label="Cortana">
        <circle cx="13" cy="14" r="7.500" stroke="#fff" strokeWidth="2" />
      </TaskIcon>
      <TaskIcon label="任务视图">
        <path d="M5 5v3h9V5M5 22v-3h9v3M5 11h9v5H5zM18 5v2M18 10v12M17 12h3" stroke="#e5e5ee" strokeWidth="1.300" />
      </TaskIcon>
      <span className="mr-[10px] ml-[3px] h-6 border-l border-[#5a5c80]" />
      <TaskIcon label="Internet Explorer">
        <path d="M21 17a8 8 0 1 1 1-4H7" stroke="#3fb4f2" strokeWidth="4" />
        <path d="M3 24C-2 18 18-2 24 3c1 1 1 3 0 5" stroke="#f1c232" strokeWidth="2" />
      </TaskIcon>
      <TaskIcon label="微信" running>
        <path d="M0 0h26v26H0z" fill="#0aa51f" />
        <ellipse cx="10" cy="10" rx="7" ry="6" fill="#fff" />
        <ellipse cx="17" cy="16" rx="6" ry="5" fill="#fff" stroke="#0aa51f" />
        <path d="M7 9h1M12 9h1M15 15h1M18 15h1" stroke="#0aa51f" strokeWidth="1.500" />
      </TaskIcon>
      <TaskIcon label="广联达" running active>
        <rect width="26" height="26" rx="5" fill="#3d93ec" />
        <path d="M4 7c6-1 11 1 18 0v4h-6l-1 12h-4L10 11H4z" fill="#fff" />
      </TaskIcon>
      <TaskIcon label="资源管理器" running>
        <path d="M1 2h9l2 3h13v16H1z" fill="#f0b93a" />
        <path d="M1 8h24v14H1z" fill="#fbd96c" />
        <path d="M5 24v-9h16v9h-4v-5H9v5z" fill="#3f9be0" />
      </TaskIcon>
      <TaskIcon label="CAD" running>
        <rect x="1" y="1" width="24" height="24" rx="4" fill="#1a63b0" stroke="#c9d6e6" strokeWidth="1.500" />
        <text x="13" y="17" fontSize="10" fontWeight="700" fill="#fff" textAnchor="middle">
          CAD
        </text>
      </TaskIcon>
      <TaskIcon label="Edge" running>
        <path d="M3 12C5-1 25 0 23 15H9c0 6 7 8 13 4v5C12 28 3 23 6 15c1-3 3-4 5-5-1 1-2 2-2 3h8c0-7-10-7-14-1z" fill="#1687e0" />
      </TaskIcon>
      <TaskIcon label="浏览器" running>
        <circle cx="13" cy="13" r="11" stroke="#fff" strokeWidth="2" />
        <path d="M4 20l9-9 4 5 3-2 3 4c-4 8-15 8-19 2z" fill="#fff" />
        <path d="M5 8c5 3 12-2 16 8" stroke="#fff" strokeWidth="2" />
      </TaskIcon>

      <div className="mr-4 ml-auto text-center leading-[17px]">
        <p>71℃</p>
        <p>CPU温度</p>
      </div>
      <div className="flex items-center gap-[7px]">
        <svg viewBox="0 0 18 18" className="h-[18px] w-[18px]" fill="none" stroke="#25b4ee" strokeWidth="3">
          <path d="M9 2C0 3 0 14 9 15M9 9h6v7" />
        </svg>
        <svg viewBox="0 0 18 18" className="h-[18px] w-[18px]">
          <path d="M1 3l7-2 7 2c0 7-2 12-7 14C3 15 1 10 1 3z" fill="#fff" />
          <path d="M8 1v16M1 8h14" stroke="#25284a" />
          <path d="M12 8l6 10H7z" fill="#f5b921" />
          <path d="M12.500 11.500v3M12.500 15.500v1" stroke="#000" />
        </svg>
        <svg viewBox="0 0 18 18" className="h-[18px] w-[18px]">
          <circle cx="11" cy="4" r="3.500" fill="#c9a98d" />
          <path d="M5 17c0-12 12-12 12 0z" fill="#5aa6a0" />
          <circle cx="5" cy="12" r="4" fill="#ddd" />
        </svg>
        <svg viewBox="0 0 18 18" className="h-[18px] w-[18px]" strokeWidth="2">
          <path d="M3 4l12 3M4 9l10 4M10 2l7 8M2 12l5-5" stroke="#e9e9e9" />
          <path d="M2 16l4-3" stroke="#e33" />
          <path d="M5 17l4-3" stroke="#4c4" />
        </svg>
        <svg viewBox="0 0 18 18" className="h-[18px] w-[18px]">
          <circle cx="7" cy="7" r="6.500" fill="#6ccb3c" />
          <circle cx="12.500" cy="12" r="5" fill="#f0f0f0" />
        </svg>
        <svg viewBox="0 0 18 18" className="h-[18px] w-[18px]">
          <path d="M2 6h3l6-5v16l-6-5H2z" fill="#d9492e" />
          <path d="M14 5v8" stroke="#eee" />
        </svg>
        <svg viewBox="0 0 18 18" className="h-[18px] w-[18px]" fill="#8e9299">
          <path d="M1 1h15v12H1zM3 15h4v2H3zM11 15h4v2h-4z" />
        </svg>
        <svg viewBox="0 0 18 18" className="h-[18px] w-[18px]" fill="none" stroke="#fff">
          <path d="M3.500 6.500h12v8h-12zM15.500 9H17v3h-1.500M3 1v3M1 4h5v2c-1 2-4 2-5 0z" />
          <path d="M6 8.500h8v4H6z" fill="#fff" />
        </svg>
        <svg viewBox="0 0 18 18" className="h-[18px] w-[18px]" fill="none" stroke="#d5d7e4" strokeWidth="1.300">
          <path d="M1 16A14 14 0 0 1 16 2M5 16A10 10 0 0 1 16 6M9 16a7 7 0 0 1 7-6M13 16a3 3 0 0 1 3-3" />
        </svg>
        <svg viewBox="0 0 18 18" className="h-[18px] w-[18px]" fill="none" stroke="#fff" strokeWidth="1.200">
          <path d="M1 6.500h3l4-4v13l-4-4H1zM11 6.500l5 5M16 6.500l-5 5" />
        </svg>
        <span className="text-base">中</span>
      </div>
      <div className="mr-[10px] ml-3 text-center leading-[19px]">
        <p>10:30</p>
        <p>2019/12/3</p>
      </div>
      <span className="mr-[2px] h-full border-l border-[#6d6f8e]" />
    </div>
  );
}

export default function App() {
  return (
    <div className="flex h-screen flex-col overflow-hidden bg-white font-['Noto_Sans','Noto_Sans_CJK_SC',sans-serif] text-black">
      <TitleBar />
      <Ribbon />
      <FilterBar />
      <div className="flex min-h-0 flex-1">
        <NavTree />
        <div className="flex w-[338px] shrink-0 flex-col gap-1 pl-1">
          <DrawingPanel />
          <PropertyPanel />
        </div>
        <div className="flex w-[5px] shrink-0 flex-col bg-white pt-[277px]">
          <button type="button" aria-label="收起面板" className="flex h-[103px] items-center bg-[#5f6a76] text-white">
            <ChevronDown className="h-2 w-[5px] rotate-90" />
          </button>
        </div>
        <Viewport />
      </div>
      <StatusBar />
      <Taskbar />
    </div>
  );
}
